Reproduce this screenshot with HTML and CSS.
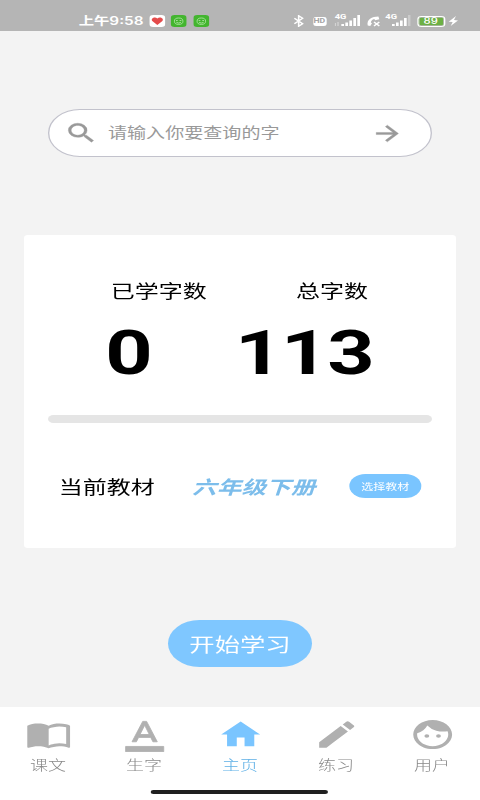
FILE: index.html
```html
<!DOCTYPE html>
<html lang="zh-CN">
<head>
<meta charset="utf-8">
<title>生字学习</title>
<link rel="stylesheet" href="styles.css">
</head>
<body>
<div class="screen">
  <header class="status">
    <div class="status-left">
      <span class="time">上午9:58</span>
      <svg class="app" viewBox="0 0 12 12"><rect width="12" height="12" rx="3" fill="#fff"/><path d="M6 10 2.2 6C.7 3.6 4.2 1.1 6 3.6 7.800 1.100 11.300 3.600 9.800 6Z" fill="#e44b4b"/></svg>
      <svg class="app" viewBox="0 0 12 12"><rect width="12" height="12" rx="3" fill="#43b52f"/><g fill="none" stroke="#b5e8aa" stroke-width=".7"><circle cx="6" cy="6.200" r="3.200"/><path d="M4 5.500h1.300M6.700 5.500H8M4.300 7.300q1.700 1.500 3.400 0"/></g></svg>
      <svg class="app" viewBox="0 0 12 12"><rect width="12" height="12" rx="3" fill="#43b52f"/><g fill="none" stroke="#b5e8aa" stroke-width=".7"><circle cx="6" cy="6.200" r="3.200"/><path d="M4 5.500h1.300M6.700 5.500H8M4.300 7.300q1.700 1.500 3.400 0"/></g></svg>
    </div>
    <div class="status-right">
      <svg class="bt" viewBox="0 0 8 12"><path d="M.8 3.300 7 8.700 4 11.300V.7L7 3.300.8 8.700" fill="none" stroke="#fff" stroke-width="1.200"/></svg>
      <span class="hd">HD</span>
      <span class="signal dual"><b>4G</b><svg viewBox="0 0 19 12"><path d="M0 8h1v3H0zM2 7h1v4H2z" fill="#d3d3d3"/><path d="M5 9h2v2H5zM8 7.500h2V11H8zM11 5.500h2V11h-2zM14 3h2v8h-2zM17 0h2v11h-2z" fill="#fff"/></svg></span>
      <svg class="call" viewBox="0 0 10 12"><path d="M.8 10.500C-.2 4.500 4 1.500 8.800 1.500L9.500 4.300 6.400 5.200 5.700 4C4 4.500 3.200 6 3.100 7.500L4 8.300 2.700 11Z" fill="#fff"/><path d="m5.500 7 4 4m0-4-4 4" stroke="#fff" stroke-width="1.100"/></svg>
      <span class="signal"><b>4G</b><svg viewBox="0 0 19 12"><path d="M5 9h2v2H5zM8 7.500h2V11H8zM11 5.500h2V11h-2zM14 3h2v8h-2z" fill="#fff"/><path d="M17 0h2v11h-2z" fill="#ccc"/></svg></span>
      <span class="battery">89</span>
      <svg class="bolt" viewBox="0 0 8 12"><path d="M6 1 .5 6.700l3 .3L2 11l5.500-5.600-3-.3Z" fill="#fff"/></svg>
    </div>
  </header>

  <main class="content">
    <div class="search">
      <svg class="icon search-icon" viewBox="0 0 24 24"><path d="M15.500 14h-.79l-.28-.27A6.470 6.470 0 0 0 16 9.500 6.500 6.500 0 1 0 9.500 16c1.610 0 3.090-.59 4.230-1.570l.27.28v.79l5 4.990L20.490 19l-4.990-5zm-6 0C7.010 14 5 11.990 5 9.500S7.010 5 9.500 5 14 7.010 14 9.500 11.990 14 9.500 14z"/></svg>
      <span class="placeholder">请输入你要查询的字</span>
      <svg class="icon arrow" viewBox="0 0 24 24"><path d="m12 4-1.410 1.410L16.170 11H4v2h12.170l-5.580 5.590L12 20l8-8z"/></svg>
    </div>

    <section class="card">
      <div class="labels"><span>已学字数</span><span>总字数</span></div>
      <div class="numbers"><strong>0</strong><strong>113</strong></div>
      <div class="progress"></div>
      <div class="book">
        <span class="book-label">当前教材</span>
        <em>六年级下册</em>
        <button class="choose">选择教材</button>
      </div>
    </section>

    <button class="start">开始学习</button>
  </main>

  <nav class="tabs">
    <div class="tab"><svg viewBox="0 0 24 24" class="tab-icon"><path d="M21 5c-1.110-.35-2.330-.5-3.500-.5-1.950 0-4.050.4-5.500 1.500-1.450-1.100-3.550-1.500-5.500-1.500S2.450 4.900 1 6v14.650c0 .25.25.5.5.5.1 0 .15-.05.25-.05C3.100 20.450 5.050 20 6.500 20c1.950 0 4.050.4 5.500 1.500 1.350-.85 3.800-1.500 5.500-1.500 1.650 0 3.350.3 4.750 1.050.1.050.15.050.25.050.25 0 .5-.25.5-.5V6c-.6-.45-1.250-.75-2-1zm0 13.500c-1.100-.35-2.300-.5-3.500-.5-1.700 0-4.150.65-5.500 1.500V8c1.350-.85 3.800-1.500 5.500-1.500 1.200 0 2.400.15 3.500.5v11.500z"/></svg><span>课文</span></div>
    <div class="tab"><svg viewBox="0 0 24 24" class="tab-icon letter"><path d="M2.200 20.200h19.600v3.600H2.200z"/><path d="M11 3 5.500 17h2.250l1.120-3h6.250l1.120 3h2.250L13 3h-2zm-1.380 9L12 5.670 14.380 12z"/></svg><span>生字</span></div>
    <div class="tab active"><svg viewBox="0 0 24 24" class="tab-icon"><path d="M10 20v-6h4v6h5v-8h3L12 3 2 12h3v8z"/></svg><span>主页</span></div>
    <div class="tab"><svg viewBox="0 0 24 24" class="tab-icon"><path d="M3 17.250V21h3.750L17.810 9.940l-3.750-3.750L3 17.250zM20.710 7.040a1 1 0 0 0 0-1.410l-2.340-2.340a1 1 0 0 0-1.410 0l-1.830 1.830 3.750 3.750 1.830-1.830z"/></svg><span>练习</span></div>
    <div class="tab"><svg viewBox="0 0 24 24" class="tab-icon"><path d="M9 11.750a1.250 1.250 0 1 0 0 2.500 1.250 1.250 0 0 0 0-2.500zm6 0a1.250 1.250 0 1 0 0 2.500 1.250 1.250 0 0 0 0-2.500zM12 2C6.480 2 2 6.480 2 12s4.480 10 10 10 10-4.480 10-10S17.520 2 12 2zm0 18c-4.410 0-8-3.590-8-8 0-.29.020-.58.050-.86 2.360-1.050 4.230-2.980 5.210-5.370a9.974 9.974 0 0 0 10.410 3.970c.21.710.33 1.470.33 2.260 0 4.410-3.590 8-8 8z"/></svg><span>用户</span></div>
  </nav>
  <div class="home-bar"></div>
</div>
</body>
</html>
```

FILE: styles.css
```css
* { box-sizing: border-box; }
html, body { margin: 0; height: 800px; overflow: hidden; background: #f3f3f3; }
button { border: 0; padding: 0; font-family: inherit; }
svg { display: block; flex: none; }

/* The 360-unit layout is drawn at 480px wide. */
.screen {
  width: 360px;
  height: 800px;
  transform: scaleX(1.33333);
  transform-origin: 0 0;
  display: flex;
  flex-direction: column;
  font-family: Roboto, "Noto Sans CJK SC", sans-serif;
  color: #000;
}

.status {
  height: 31px;
  flex: none;
  padding: 11px 16px 0 59px;
  display: flex;
  justify-content: space-between;
  background: #b5b5b5;
  color: #fff;
}
.status-left, .status-right { display: flex; align-items: center; height: 20px; }
.time { width: 48px; font: 600 11.500px/20px Inter, "Noto Sans CJK SC", sans-serif; white-space: nowrap; }
.app { width: 12px; height: 12px; margin-left: 4.500px; }
.bt { width: 8px; height: 12px; }
.hd {
  width: 10px; height: 9px; margin-left: 6.500px;
  border-radius: 2px; background: #fff; color: #a5a5a5;
  font: 700 6.500px/9px Roboto, sans-serif; text-align: center;
}
.signal { position: relative; width: 19px; margin-left: 6.500px; }
.signal svg { width: 19px; height: 12px; }
.signal b { position: absolute; left: 0; top: -2px; font: 700 7px/8px Roboto, sans-serif; }
.call { width: 10px; height: 12px; margin-left: 5px; }
.call + .signal { margin-left: 4px; }
.battery {
  width: 21px; height: 11px; margin-left: 4.500px;
  border: 1.200px solid #fff; border-radius: 3px;
  background: #6cb044; box-shadow: inset 0 0 0 .7px #b5b5b5;
  font: 500 8.500px/9px Inter, sans-serif; text-align: center;
}
.bolt { width: 8px; height: 12px; margin-left: 2.500px; }

.content { flex: 1; display: flex; flex-direction: column; align-items: center; background: #f3f3f3; }

.search {
  width: 288px; height: 48px; margin-top: 78px; padding: 0 24px 0 11px;
  display: flex; align-items: center;
  background: #fff; border: 1px solid #c2c2cc; border-radius: 24px;
  color: #999;
}
.icon { width: 26px; height: 26px; fill: #999; }
.search-icon { stroke: #999; stroke-width: .3px; }
.placeholder { margin-left: 7px; font-size: 14.300px; line-height: 20px; color: #999; }
.arrow { margin-left: auto; width: 25px; height: 25px; margin-right: -4px; stroke: #999; stroke-width: .3px; }

.card { width: 324px; height: 313px; margin-top: 78px; padding: 0 18px; background: #fff; border-radius: 3px; }
.labels { display: flex; padding: 44px 0 0 47px; font-size: 18px; line-height: 26px; }
.labels span + span { margin-left: 67px; }
.numbers { display: flex; height: 72px; margin-top: 12px; padding-left: 43px; font-size: 62px; line-height: 72px; letter-spacing: -.9px; }
.numbers strong + strong { margin-left: 62.500px; }
.progress { height: 8px; margin-top: 26px; border-radius: 4px; background: #e5e5e5; }
.book { display: flex; align-items: center; margin-top: 48px; padding-left: 8px; height: 30px; }
.book-label { font-size: 18px; line-height: 26px; padding-top: 3px; }
.book em { margin-left: 28px; padding-top: 3px; font-size: 18.500px; line-height: 26px; font-weight: 700; color: #7cbdeb; }
.choose { width: 54px; height: 24px; margin-left: auto; margin-right: 8px; border-radius: 12px; background: #7ac5ff; color: #fff; font-size: 9px; }

.start { width: 108px; height: 47px; margin-top: 72px; border-radius: 24px; background: #7fc7ff; color: #fff; font-size: 19px; }

.tabs { height: 83px; flex: none; display: flex; background: #fff; }
.tab { flex: 1; display: flex; flex-direction: column; align-items: center; color: #888; font-size: 13.500px; font-weight: 300; line-height: 20px; }
.tab-icon { width: 35px; height: 35px; margin: 9.700px 0 3.300px; fill: #b0b0b0; }
.letter { stroke: #b0b0b0; stroke-width: .5px; }
.active { color: #5fb0e6; }
.active .tab-icon { fill: #7ac5ff; }
.home-bar { width: 360px; height: 10px; flex: none; background: #fff; }
.home-bar::before { content: ""; display: block; width: 133px; height: 4px; margin-left: 113px; border-radius: 2px; background: #202020; }
```
